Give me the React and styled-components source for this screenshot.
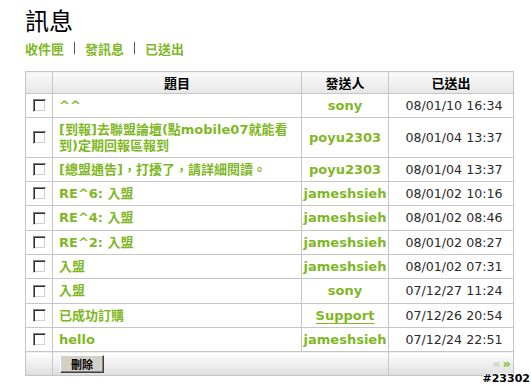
import React from "react";
import styled, { createGlobalStyle } from "styled-components";

const Global = createGlobalStyle`
  html, body { margin: 0; padding: 0; background: #fff; }
  body { font-family: "DejaVu Sans", Verdana, "Noto Sans CJK TC", sans-serif; }
`;

const GREEN = "#7fb726";
const BORDER = "#c6c6c6";

const Page = styled.div`
  position: relative;
  width: 531px;
  height: 385px;
  padding: 5px 0 0 25px;
  box-sizing: border-box;
  overflow: hidden;
`;

const Title = styled.h1`
  margin: 0;
  font-family: "Noto Sans CJK TC", sans-serif;
  font-weight: 400;
  font-size: 24px;
  line-height: 30px;
  color: #000;
`;

const Nav = styled.div`
  margin-top: 5px;
  display: flex;
  align-items: center;
  gap: 10px;
  height: 16px;
  font-size: 13px;
  font-weight: 700;
  font-family: "DejaVu Sans", "Noto Sans CJK TC", sans-serif;
`;

const NavLink = styled.a`
  color: ${GREEN};
  text-decoration: none;
`;

const Sep = styled.span`
  width: 1px;
  height: 12px;
  background: #555;
`;

const Table = styled.table`
  margin-top: 15px;
  width: 488px;
  border-collapse: collapse;
  table-layout: fixed;
  font-size: 13px;
  font-family: "DejaVu Sans", "Noto Sans CJK TC", sans-serif;
`;

const Th = styled.th`
  border: 1px solid ${BORDER};
  background: linear-gradient(#fafafa, #e6e6e6);
  height: 21px;
  padding: 0;
  font-weight: 700;
  color: #000;
  text-align: center;
  font-family: "Noto Sans CJK TC", sans-serif;
  font-size: 13px;
  line-height: 21px;
`;

const Td = styled.td`
  border: 1px solid ${BORDER};
  padding: 4px ${(p) => (p.$align === "left" ? "6px" : "0")} 4px
    ${(p) => (p.$align === "left" ? "6px" : p.$plain ? "6px" : "0")};
  line-height: 15.3px;
  text-align: ${(p) => p.$align || "center"};
  vertical-align: middle;
  color: ${(p) => (p.$plain ? "#2a2a2a" : GREEN)};
  font-weight: ${(p) => (p.$plain ? 400 : 700)};
  font-size: ${(p) => (p.$plain ? "12.6px" : "13px")};
  white-space: ${(p) => (p.$nowrap ? "nowrap" : "normal")};
  overflow: hidden;
`;

const FootTd = styled.td`
  border: 1px solid ${BORDER};
  background: linear-gradient(#ffffff, #dedede);
  height: 23px;
  padding: 0 ${(p) => (p.$right ? "2px" : "8px")};
  text-align: ${(p) => (p.$right ? "right" : "left")};
  vertical-align: middle;
`;

const Check = styled.input.attrs({ type: "checkbox" })`
  appearance: none;
  -webkit-appearance: none;
  display: block;
  margin: 0 auto;
  width: 13px;
  height: 13px;
  box-sizing: border-box;
  background: #fff;
  border: 1px solid;
  border-color: #808080 #ffffff #ffffff #808080;
  box-shadow: inset 1px 1px 0 #303030, inset -1px -1px 0 #d4d0c8;
`;

const Sender = styled.span`
  text-decoration: ${(p) => (p.$underline ? "underline" : "none")};
  text-underline-offset: 3px;
`;

const DeleteButton = styled.button`
  width: 44px;
  height: 18px;
  padding: 0;
  margin-left: -1px;
  background: #d4d0c8;
  border: 1px solid;
  border-color: #ffffff #404040 #404040 #ffffff;
  box-shadow: inset -1px -1px 0 #808080;
  font-family: "Noto Sans CJK TC", sans-serif;
  font-weight: 700;
  font-size: 11px;
  line-height: 14px;
  color: #000;
  display: block;
`;

const Pager = styled.span`
  font-size: 13px;
  font-weight: 700;
  line-height: 16px;
  margin-left: 2px;
  color: ${(p) => (p.$on ? "#7fb726" : "#c9d3bf")};
`;

const Watermark = styled.div`
  position: absolute;
  right: 1px;
  bottom: 0px;
  font-family: "DejaVu Sans", sans-serif;
  font-weight: 700;
  font-size: 11px;
  line-height: 13px;
  color: #000;
  text-shadow: 1px 0 #fff, -1px 0 #fff, 0 1px #fff, 0 -1px #fff;
`;

const rows = [
  { t: "^^", s: "sony", d: "08/01/10 16:34" },
  { t: "[到報]去聯盟論壇(點mobile07就能看到)定期回報區報到", s: "poyu2303", d: "08/01/04 13:37" },
  { t: "[總盟通告]，打擾了，請詳細閱讀。", s: "poyu2303", d: "08/01/04 13:37" },
  { t: "RE^6: 入盟", s: "jameshsieh", d: "08/01/02 10:16" },
  { t: "RE^4: 入盟", s: "jameshsieh", d: "08/01/02 08:46" },
  { t: "RE^2: 入盟", s: "jameshsieh", d: "08/01/02 08:27" },
  { t: "入盟", s: "jameshsieh", d: "08/01/02 07:31" },
  { t: "入盟", s: "sony", d: "07/12/27 11:24" },
  { t: "已成功訂購", s: "Support", d: "07/12/26 20:54", u: true },
  { t: "hello", s: "jameshsieh", d: "07/12/24 22:51" },
];

export default function App() {
  return (
    <>
      <Global />
      <Page>
        <Title>訊息</Title>
        <Nav>
          <NavLink>收件匣</NavLink>
          <Sep />
          <NavLink>發訊息</NavLink>
          <Sep />
          <NavLink>已送出</NavLink>
        </Nav>
        <Table>
          <colgroup>
            <col style={{ width: 27 }} />
            <col style={{ width: 249 }} />
            <col style={{ width: 87 }} />
            <col style={{ width: 125 }} />
          </colgroup>
          <thead>
            <tr>
              <Th />
              <Th>題目</Th>
              <Th>發送人</Th>
              <Th>已送出</Th>
            </tr>
          </thead>
          <tbody>
            {rows.map((r, i) => (
              <tr key={i}>
                <Td>
                  <Check />
                </Td>
                <Td $align="left">{r.t}</Td>
                <Td $nowrap>
                  <Sender $underline={r.u}>{r.s}</Sender>
                </Td>
                <Td $plain $nowrap>
                  {r.d}
                </Td>
              </tr>
            ))}
          </tbody>
          <tfoot>
            <tr>
              <FootTd />
              <FootTd colSpan={2}>
                <DeleteButton>刪除</DeleteButton>
              </FootTd>
              <FootTd $right>
                <Pager>«</Pager>
                <Pager $on>»</Pager>
              </FootTd>
            </tr>
          </tfoot>
        </Table>
        <Watermark>#23302</Watermark>
      </Page>
    </>
  );
}
